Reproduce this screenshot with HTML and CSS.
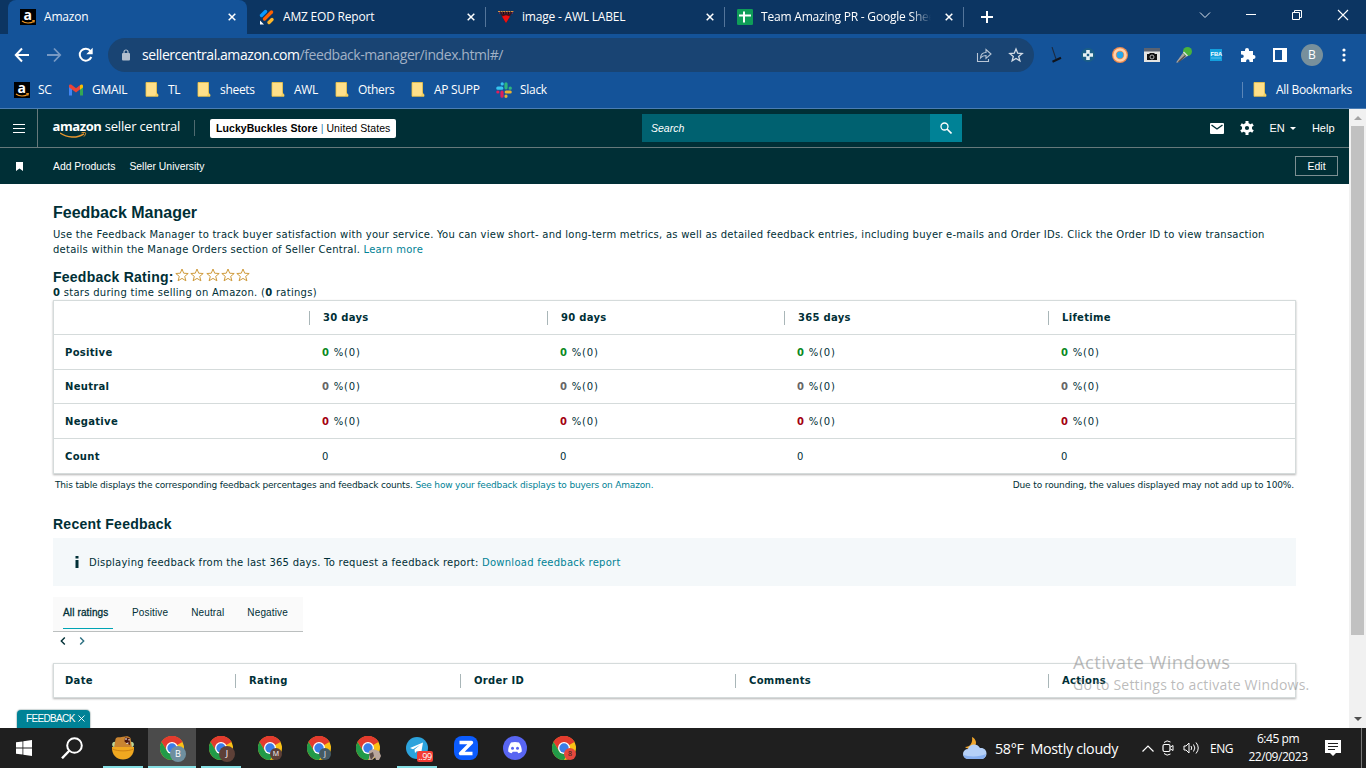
FILE: index.html
```html
<!DOCTYPE html>
<html lang="en">
<head>
    <meta charset="UTF-8">
    <meta name="viewport" content="width=device-width, initial-scale=1.0">
    <title>Amazon</title>
    <link rel="stylesheet" href="styles.css">
</head>
<body>
    <!-- Shared icons -->
    <svg class="sprite" width="0" height="0">
        <symbol id="amazon" viewBox="0 0 16 16">
            <rect width="16" height="16" fill="#000"/>
            <text x="3.4" y="10.6" font-family="Open Sans" font-weight="700" font-size="14" fill="#fff">a</text>
            <path d="M2 12c3.5 2.6 8.500 2.600 12 .2M12.300 11.500l2 .2-.6 1.800" fill="none" stroke="#f59a22" stroke-width="1.200"/>
        </symbol>
        <symbol id="close" viewBox="0 0 8 8">
            <path d="M.7.7l6.600 6.600M7.300.7L.7 7.300" stroke="#fff" stroke-width="1.500"/>
        </symbol>
        <symbol id="folder" viewBox="0 0 14 15">
            <path d="M1 .5h10.500v11l1.500 1v1.800H1z" fill="#ffe08a" stroke="#f2c744" stroke-width=".8"/>
            <path d="M10 14l1.500-4 1 2.500V14z" fill="#f5d060"/>
        </symbol>
        <symbol id="chrome" viewBox="0 0 24 24">
            <circle cx="12" cy="12" r="12" fill="#fbc116"/>
            <path d="M12 12L1.600 6A12 12 0 0 1 22.400 6z" fill="#e33b2e"/>
            <path d="M12 6h10.400A12 12 0 0 0 1.600 6L7 15z" fill="#e33b2e"/>
            <path d="M1.600 6a12 12 0 0 0 10.400 18l5.200-9L12 17.500 7 15z" fill="#229a48"/>
            <circle cx="12" cy="12" r="6" fill="#fff"/>
            <circle cx="12" cy="12" r="4.700" fill="#3b7de8"/>
        </symbol>
        <symbol id="star" viewBox="0 0 14 14">
            <path d="M7 1l1.700 4.200 4.500.3-3.500 2.900 1.200 4.400L7 10.400l-3.900 2.400 1.200-4.400L.8 5.500l4.500-.3z" fill="none" stroke="#cf9b3c" stroke-width="1"/>
        </symbol>
    </svg>

    <div class="browser">
        <div class="tab-strip">
            <div class="tab active">
                <svg class="favicon"><use href="#amazon"/></svg>
                <span class="tab-title">Amazon</span>
                <svg class="tab-close"><use href="#close"/></svg>
            </div>
            <div class="tab">
                <svg class="favicon" viewBox="0 0 16 16">
                    <g stroke-width="3.400" stroke-linecap="round">
                        <path d="M2.500 6.500l4-4" stroke="#0a99ff"/>
                        <path d="M5.500 10l7-7" stroke="#ff6100"/>
                        <path d="M10 13.500l3-3" stroke="#ffb629"/>
                    </g>
                    <path d="M1 11.500l4 4H1z" fill="#fff"/>
                </svg>
                <span class="tab-title">AMZ EOD Report</span>
                <svg class="tab-close"><use href="#close"/></svg>
            </div>
            <div class="tab">
                <svg class="favicon" viewBox="0 0 16 16">
                    <path d="M1 2.500h14l-2 3H3z" fill="#101010"/>
                    <path d="M0 2.500h16" stroke="#d9913e" stroke-dasharray="2 .6"/>
                    <path d="M1 4h14" stroke="#b03060" stroke-dasharray="1.500 1"/>
                    <path d="M3 5.500h10l-5 8.500z" fill="#5c0c10"/>
                    <path d="M4 7.500L8 6.300l4 1.200L8 14z" fill="#f01010"/>
                </svg>
                <span class="tab-title">image - AWL LABEL</span>
                <svg class="tab-close"><use href="#close"/></svg>
            </div>
            <div class="tab">
                <svg class="favicon" viewBox="0 0 16 16">
                    <rect width="16" height="16" rx="1.200" fill="#0f9d58"/>
                    <path d="M7 2.500v11M2 6.500h12" stroke="#fff" stroke-width="2"/>
                </svg>
                <span class="tab-title faded">Team Amazing PR - Google Sheets</span>
                <svg class="tab-close"><use href="#close"/></svg>
            </div>
            <svg class="new-tab" viewBox="0 0 12 12"><path d="M6 0v12M0 6h12" stroke="#fff" stroke-width="2"/></svg>
            <div class="window-controls">
                <svg width="12" height="12" viewBox="0 0 12 12"><path d="M1 3.500l5 5 5-5" fill="none" stroke="#dde5ee"/></svg>
                <svg width="12" height="12" viewBox="0 0 12 12"><path d="M1 5.500h10" stroke="#fff"/></svg>
                <svg width="12" height="12" viewBox="0 0 12 12"><path d="M1.500 3.500h7v7h-7zM3.500 3.500v-2h7v7h-2" fill="none" stroke="#fff"/></svg>
                <svg width="12" height="12" viewBox="0 0 12 12"><path d="M1 1l10 10M11 1L1 11" stroke="#fff" stroke-width="1.100"/></svg>
            </div>
        </div>

        <div class="toolbar">
            <div class="nav-buttons">
                <svg width="16" height="16" viewBox="0 0 16 16"><path d="M15 8H2M8 1.500L1.800 8 8 14.500" fill="none" stroke="#fff" stroke-width="2"/></svg>
                <svg width="16" height="16" viewBox="0 0 16 16"><path d="M1 8h13M8 1.500L14.200 8 8 14.500" fill="none" stroke="#7799c4" stroke-width="1.800"/></svg>
                <svg width="16" height="16" viewBox="0 0 16 16"><path d="M13.300 10A6 6 0 1 1 12.500 4" fill="none" stroke="#fff" stroke-width="2"/><path d="M14.700.8v6.400H8.300z" fill="#fff"/></svg>
            </div>
            <div class="address-bar">
                <svg class="lock" width="10" height="12" viewBox="0 0 10 12"><rect x="1" y="4" width="8" height="7.500" rx="1" fill="#b3bfce"/><path d="M3 4.500V3a2 2 0 0 1 4 0v1.500" fill="none" stroke="#b3bfce" stroke-width="1.200"/></svg>
                <span class="url"><b>sellercentral.amazon.com</b>/feedback-manager/index.html#/</span>
                <svg width="16" height="16" viewBox="0 0 16 16"><path d="M1.500 6v8.500h11V12M4.500 11c.3-4 2.500-5.500 5.500-5.500V2.500L15 7l-5 4.300V8.500C7.500 8.500 6 9 4.500 11z" fill="none" stroke="#b9c6d6" stroke-width="1.100"/></svg>
                <svg width="16" height="16" viewBox="0 0 16 16"><path d="M8 2l1.700 4.200 4.500.3-3.500 2.900 1.200 4.400L8 11.400l-3.900 2.400 1.200-4.400-3.500-2.900 4.500-.3z" fill="none" stroke="#d3dce6" stroke-width="1.300"/></svg>
            </div>
            <div class="extensions">
                <svg viewBox="0 0 16 16"><path d="M4 0l4 12" stroke="#1d2c42" stroke-width="1.100"/><path d="M4.500 14.700l8.500-4" stroke="#10141c" stroke-width="2.200"/></svg>
                <svg viewBox="0 0 16 16"><circle cx="8" cy="8" r="7" fill="#1b5e86"/><path d="M8 3v10M3 8h10" stroke="#e8f2f4" stroke-width="3.600"/><rect x="6.800" y="6.800" width="2.400" height="2.400" fill="#1b5e86"/></svg>
                <svg viewBox="0 0 16 16"><circle cx="8" cy="8" r="8" fill="#f08a4b"/><circle cx="8" cy="8" r="5.500" fill="none" stroke="#ffd2ac" stroke-width="2.600"/><circle cx="8" cy="8" r="3.400" fill="#22a7ee"/></svg>
                <svg viewBox="0 0 16 16"><rect y="1" width="16" height="14" fill="#e4e4e2"/><path d="M0 1h16v3.500H0z" fill="#5a6270"/><path d="M3 7h2l1-1h4l1 1h2v6H3z" fill="#111"/><circle cx="8" cy="10" r="2" fill="none" stroke="#ddd" stroke-width=".8"/></svg>
                <svg viewBox="0 0 16 16"><path d="M0 15.500L8 4.500l4 4-10 7z" fill="#a9a39e"/><path d="M2.500 15L10 8" stroke="#4f4b4a" stroke-width="1.200"/><circle cx="11.500" cy="4.500" r="4.500" fill="#48b23c"/><path d="M7.500 5l4 4" stroke="#ddd" stroke-width="1.500"/></svg>
                <svg viewBox="0 0 16 16"><rect x="2" y="2" width="12" height="12" fill="#13a0de"/><text x="2.400" y="8.700" font-family="Liberation Sans" font-weight="700" font-size="5.800" fill="#fff">FBA</text><path d="M3 11h10" stroke="#70c8ef" stroke-width=".8"/></svg>
                <svg viewBox="0 0 16 16"><path d="M1 4h4V3a2 2 0 0 1 4 0v1h4v4h.500a2 2 0 0 1 0 4H13v3H9.500v-1a1.700 1.700 0 0 0-3.400 0v1H1v-4h1a1.700 1.700 0 0 0 0-3.500H1z" fill="#fff"/></svg>
                <svg viewBox="0 0 16 16"><path d="M2 2h12v12H2z" fill="none" stroke="#fff" stroke-width="2"/><path d="M10 1h5v14h-5z" fill="#fff"/></svg>
            </div>
            <div class="profile">B</div>
            <svg class="kebab" viewBox="0 0 4 14"><circle cx="2" cy="2" r="1.600" fill="#fff"/><circle cx="2" cy="7" r="1.600" fill="#fff"/><circle cx="2" cy="12" r="1.600" fill="#fff"/></svg>
        </div>

        <div class="bookmarks">
            <a class="bookmark sc"><svg class="favicon"><use href="#amazon"/></svg>SC</a>
            <a class="bookmark gmail"><svg width="14" height="12" viewBox="0 0 14 12"><path d="M0 2v9.500h3V4z" fill="#4285f4"/><path d="M14 2v9.500h-3V4z" fill="#34a853"/><path d="M0 1.800C0 .5 1.500 0 2.500.8L7 4.300 11.500.8l-.3 4.400L7 8.400 0 3.200z" fill="#ea4335"/><path d="M11 1.200C12.500 0 14 .5 14 2v1.500l-3 2.200z" fill="#fbbc04"/></svg>GMAIL</a>
            <a class="bookmark tl"><svg class="folder"><use href="#folder"/></svg>TL</a>
            <a class="bookmark sheets"><svg class="folder"><use href="#folder"/></svg>sheets</a>
            <a class="bookmark awl"><svg class="folder"><use href="#folder"/></svg>AWL</a>
            <a class="bookmark others"><svg class="folder"><use href="#folder"/></svg>Others</a>
            <a class="bookmark supp"><svg class="folder"><use href="#folder"/></svg>AP SUPP</a>
            <a class="bookmark slack">
                <svg width="16" height="16" viewBox="0 0 16 16"><g stroke-width="3.200" stroke-linecap="round"><path d="M1.800 6.200h4M6.200 1.800v.1" stroke="#36c5f0"/><path d="M10 1.800v4M14.200 6.200h.1" stroke="#2eb67d"/><path d="M10.200 10h4M10 14.200v.1" stroke="#ecb22e"/><path d="M6 10.200v4M1.800 10h.1" stroke="#e01e5a"/></g></svg>
                Slack
            </a>
            <a class="bookmark all"><svg class="folder"><use href="#folder"/></svg>All Bookmarks</a>
        </div>
    </div>

    <div class="viewport">
        <div class="page">
            <header class="top-nav">
                <div class="menu-button">
                    <svg width="12" height="9" viewBox="0 0 12 9"><path d="M0 .5h12M0 4.500h12M0 8.500h12" stroke="#fff" stroke-width="1.200"/></svg>
                </div>
                <div class="brand">
                    <span class="brand-name"><b>amazon</b> seller central</span>
                    <svg class="smile" width="27" height="7" viewBox="0 0 27 7"><path d="M0 1c7 5 17 5.500 24 .8" fill="none" stroke="#e8962e" stroke-width="1.400"/><path d="M21.500.8c2-.6 3.500-.5 4 0s-.3 2.500-1.500 3.700" fill="none" stroke="#e8962e"/></svg>
                </div>
                <div class="store-picker"><b>LuckyBuckles Store</b> <i>|</i> United States</div>
                <div class="search">
                    <span class="search-input">Search</span>
                    <span class="search-button">
                        <svg width="12" height="12" viewBox="0 0 12 12"><circle cx="4.500" cy="4.500" r="3.500" fill="none" stroke="#fff" stroke-width="1.300"/><path d="M7 7l4.500 4.500" stroke="#fff" stroke-width="1.600"/></svg>
                    </span>
                </div>
                <div class="top-links">
                    <svg width="14" height="11" viewBox="0 0 14 11"><rect width="14" height="11" rx="1" fill="#fff"/><path d="M1.500 2L7 6l5.500-4" fill="none" stroke="#002f36" stroke-width="1.400"/></svg>
                    <svg width="14" height="14" viewBox="0 0 14 14"><circle cx="7" cy="7" r="3.600" fill="none" stroke="#fff" stroke-width="3"/><path d="M7 0v3M7 11v3M1 3.500l2.500 1.500M10.500 9L13 10.500M1 10.500L3.500 9M10.500 5L13 3.500" stroke="#fff" stroke-width="3"/></svg>
                    <span class="lang">EN <i class="caret"></i></span>
                    <span>Help</span>
                </div>
            </header>
            <nav class="sub-nav">
                <svg width="7" height="9" viewBox="0 0 7 9"><path d="M0 0h7v9L3.500 6.500 0 9z" fill="#fff"/></svg>
                <a>Add Products</a>
                <a>Seller University</a>
                <button class="edit-button">Edit</button>
            </nav>

            <main class="content">
                <h1>Feedback Manager</h1>
                <p class="intro">Use the Feedback Manager to track buyer satisfaction with your service. You can view short- and long-term metrics, as well as detailed feedback entries, including buyer e-mails and Order IDs. Click the Order ID to view transaction<br>details within the Manage Orders section of Seller Central. <a>Learn more</a></p>

                <div class="rating">
                    <h2>Feedback Rating:</h2>
                    <div class="stars">
                        <svg><use href="#star"/></svg>
                        <svg><use href="#star"/></svg>
                        <svg><use href="#star"/></svg>
                        <svg><use href="#star"/></svg>
                        <svg><use href="#star"/></svg>
                    </div>
                </div>
                <p class="rating-note"><b>0</b> stars during time selling on Amazon. (<b>0</b> ratings)</p>

                <table class="summary">
                    <colgroup><col class="c1"><col class="c2"><col class="c3"><col class="c4"><col></colgroup>
                    <tr><th></th><th><span>30 days</span></th><th><span>90 days</span></th><th><span>365 days</span></th><th><span>Lifetime</span></th></tr>
                    <tr class="positive"><th>Positive</th><td><b>0</b> %(0)</td><td><b>0</b> %(0)</td><td><b>0</b> %(0)</td><td><b>0</b> %(0)</td></tr>
                    <tr class="neutral short"><th>Neutral</th><td><b>0</b> %(0)</td><td><b>0</b> %(0)</td><td><b>0</b> %(0)</td><td><b>0</b> %(0)</td></tr>
                    <tr class="negative"><th>Negative</th><td><b>0</b> %(0)</td><td><b>0</b> %(0)</td><td><b>0</b> %(0)</td><td><b>0</b> %(0)</td></tr>
                    <tr><th>Count</th><td>0</td><td>0</td><td>0</td><td>0</td></tr>
                </table>
                <div class="table-notes">
                    <span>This table displays the corresponding feedback percentages and feedback counts. <a>See how your feedback displays to buyers on Amazon.</a></span>
                    <span>Due to rounding, the values displayed may not add up to 100%.</span>
                </div>

                <h2 class="recent-title">Recent Feedback</h2>
                <div class="info-box">
                    <svg width="4" height="12" viewBox="0 0 4 12"><path d="M.5 0h3v2.500h-3zM.5 4h3v8h-3z" fill="#002f36"/></svg>
                    <span>Displaying feedback from the last 365 days. To request a feedback report: <a>Download feedback report</a></span>
                </div>

                <div class="filter-tabs">
                    <a class="selected">All ratings</a>
                    <a>Positive</a>
                    <a>Neutral</a>
                    <a>Negative</a>
                </div>
                <div class="pager">
                    <svg width="6" height="8" viewBox="0 0 6 8"><path d="M4.800.5L1.300 4l3.500 3.500" fill="none" stroke="#002f36" stroke-width="1.400"/></svg>
                    <svg width="6" height="8" viewBox="0 0 6 8"><path d="M1.200.5L4.700 4 1.200 7.500" fill="none" stroke="#2b6f80" stroke-width="1.400"/></svg>
                </div>

                <table class="recent">
                    <colgroup><col class="c1"><col class="c2"><col class="c3"><col class="c4"><col></colgroup>
                    <tr><th>Date</th><th><span>Rating</span></th><th><span>Order ID</span></th><th><span>Comments</span></th><th><span>Actions</span></th></tr>
                </table>
            </main>
        </div>

        <div class="scrollbar">
            <i class="arrow up"></i>
            <div class="thumb"></div>
            <i class="arrow down"></i>
        </div>

        <div class="feedback-tab">FEEDBACK <svg width="7" height="7" viewBox="0 0 7 7"><path d="M.5.5l6 6M6.500.5l-6 6" stroke="#fff" stroke-width=".9"/></svg></div>
    </div>

    <div class="watermark">
        <div class="watermark-title">Activate Windows</div>
        <div class="watermark-text">Go to Settings to activate Windows.</div>
    </div>

    <div class="taskbar">
        <div class="slot start"><svg width="16" height="16" viewBox="0 0 16 16"><path d="M0 2.300l6.500-.9v6.200H0zM7.300 1.300L16 0v7.600H7.300zM0 8.400h6.500v6.200L0 13.700zM7.300 8.400H16V16l-8.700-1.200z" fill="#fff"/></svg></div>
        <div class="slot find"><svg width="22" height="22" viewBox="0 0 22 22"><circle cx="13.500" cy="8.500" r="7.300" fill="none" stroke="#fff" stroke-width="2"/><path d="M8.500 13.500L1 21.300" stroke="#fff" stroke-width="2.400"/></svg></div>
        <div class="slot running">
            <svg width="24" height="24" viewBox="0 0 24 24"><circle cx="4" cy="8.500" r="2.800" fill="#bcd79a"/><circle cx="20" cy="8.500" r="2.800" fill="#bcd79a"/><path d="M3 12L4.500 3C6 0 9 2 12 .8c3-.8 6-.8 7.500 1.200L21 12z" fill="#c98431"/><path d="M14 1.500l4.500.5.5 7-3-1.500-2.500-2z" fill="#4a1712"/><path d="M15 2v2M18 3v1.500M15.500 7.500l2-.5" stroke="#fff"/><path d="M1 11h22c.6 8-5 12.500-11 12.500S.4 19 1 11z" fill="#f0a820"/><path d="M1.500 13c5 2.500 16 2.500 21 0" fill="none" stroke="#cf8212"/></svg>
        </div>
        <div class="slot running current"><svg width="24" height="24"><use href="#chrome"/></svg><span class="badge blue">B</span></div>
        <div class="slot running"><svg width="24" height="24"><use href="#chrome"/></svg><span class="badge brown">J</span></div>
        <div class="slot"><svg width="24" height="24"><use href="#chrome"/></svg><span class="badge small brown">M</span></div>
        <div class="slot"><svg width="24" height="24"><use href="#chrome"/></svg><span class="badge small slate">J</span></div>
        <div class="slot"><svg width="24" height="24"><use href="#chrome"/></svg>
            <svg class="badge-art" width="13" height="13" viewBox="0 0 13 13"><path d="M1 3l4-2 6 2 2 5-2 4H8L7 9l-3 3H1z" fill="#b9a79d"/><path d="M1 6l4-2 1 4-3 4" fill="#5d4c47"/></svg>
        </div>
        <div class="slot running">
            <svg width="22" height="22" viewBox="0 0 22 22"><circle cx="11" cy="11" r="11" fill="#2ca3dc"/><path d="M4 11l13-5.500-2 11.500-4-3-2 2-.5-3.500L14 8l-7 4.200z" fill="#fff"/></svg>
            <span class="count">..99</span>
        </div>
        <div class="slot"><svg width="24" height="24" viewBox="0 0 24 24"><rect width="24" height="24" rx="8" fill="#0b5cff"/><path d="M5.500 6.500h12L6.500 17.500h12" fill="none" stroke="#fff" stroke-width="3.400" stroke-linejoin="round"/></svg></div>
        <div class="slot"><svg width="24" height="24" viewBox="0 0 24 24"><circle cx="12" cy="12" r="12" fill="#5865f2"/><path d="M8 6.500c2.500-.8 5.500-.8 8 0 1.800 2.500 3 6 2.800 9-1.200 1-2.300 1.500-3.500 1.800l-1-1.500h-4.600l-1 1.500c-1.200-.3-2.300-.8-3.500-1.800C5 12.500 6.200 9 8 6.500z" fill="#fff"/><circle cx="9.500" cy="12.300" r="1.500" fill="#5865f2"/><circle cx="14.500" cy="12.300" r="1.500" fill="#5865f2"/></svg></div>
        <div class="slot"><svg width="24" height="24"><use href="#chrome"/></svg><span class="badge small red">8</span></div>

        <div class="tray">
            <svg class="weather" width="26" height="24" viewBox="0 0 26 24"><path d="M10 1c4 2 5 6 3 9s-7 4-10 1c5 0 8-4 7-10z" fill="#f0a62c"/><path d="M6 23a5 5 0 0 1 0-10c1-5 9-6.500 12-1 4-.5 6.500 2 6.500 5.500S22 23 19 23z" fill="#b5d0f7"/><path d="M1.500 19c5 2 17 2 22.500-1-.5 3-2 5-5 5H6c-2.500 0-4-1.500-4.500-4z" fill="#88b0f0"/></svg>
            <span class="weather-text">58°F&nbsp; Mostly cloudy</span>
            <svg class="chevron" width="12" height="7" viewBox="0 0 12 7"><path d="M.5 6.500L6 1l5.500 5.500" fill="none" stroke="#fff" stroke-width="1.200"/></svg>
            <svg class="meet" width="12" height="16" viewBox="0 0 12 16"><rect x="1" y="4.500" width="7" height="7" rx="1.500" fill="none" stroke="#fff" stroke-width="1.200"/><path d="M8.500 7L11 5.500v5L8.500 9M2 2.500Q5-.5 8.500 2M2 13.500q3 3 6.500.5" fill="none" stroke="#fff"/></svg>
            <svg class="volume" width="17" height="14" viewBox="0 0 17 14"><path d="M1 5h2l3-3v10L3 9H1zM8 5q1.500 2 0 4M10.500 3.500q2.700 3.500 0 7M13 1.500q4.500 5.500 0 11" fill="none" stroke="#fff"/></svg>
            <span class="input-lang">ENG</span>
            <div class="clock"><div>6:45 pm</div><div>22/09/2023</div></div>
            <svg class="notify" width="16" height="16" viewBox="0 0 16 16"><path d="M0 0h16v13h-5l-3 3-3-3H0z" fill="#fff"/><path d="M3 3.500h10M3 6.500h10M3 9.500h7" stroke="#1f1f1f"/></svg>
            <i class="show-desktop"></i>
        </div>
    </div>
</body>
</html>
```
FILE: styles.css
```css
* {
    margin: 0;
    padding: 0;
    box-sizing: border-box;
}

body {
    width: 1366px;
    height: 768px;
    overflow: hidden;
    position: relative;
    display: flex;
    flex-direction: column;
    background: #fff;
    font-family: "DejaVu Sans", sans-serif;
}

svg {
    display: block;
    flex-shrink: 0;
}

.sprite {
    position: absolute;
}

/* Browser chrome */
.browser {
    height: 109px;
    background: #145399;
    border-bottom: 1px solid #4b7db3;
    font-family: "Open Sans", sans-serif;
    font-size: 12px;
    color: #fff;
}

.tab-strip {
    display: flex;
    align-items: center;
    height: 34px;
    padding-left: 8px;
    background: #0c3562;
}

.tab {
    display: flex;
    align-items: center;
    width: 239px;
    height: 34px;
    padding: 0 11px 0 12px;
    background: linear-gradient(#54759a, #54759a) right center / 1px 20px no-repeat;
}

.tab.active {
    background: #145399;
    border-radius: 8px 8px 0 0;
}

.favicon {
    width: 16px;
    height: 16px;
}

.tab-title {
    flex: 1;
    margin: 0 14px 0 8px;
    padding-bottom: 1px;
    overflow: hidden;
    white-space: nowrap;
    letter-spacing: -0.2px;
}

.tab-title.faded {
    -webkit-mask-image: linear-gradient(to right, #000 88%, transparent);
    mask-image: linear-gradient(to right, #000 88%, transparent);
}

.tab-close {
    width: 8px;
    height: 8px;
}

.new-tab {
    width: 12px;
    height: 12px;
    margin-left: 17px;
}

.window-controls {
    display: flex;
    gap: 34px;
    margin: -5px 17px 0 auto;
}

.toolbar {
    display: flex;
    align-items: center;
    height: 42px;
    padding: 0 20px 0 14px;
}

.nav-buttons {
    display: flex;
    gap: 16px;
    width: 94px;
}

.address-bar {
    display: flex;
    align-items: center;
    width: 926px;
    height: 34px;
    padding: 0 10px 0 13px;
    border-radius: 17px;
    background: #194473;
}

.url {
    flex: 1;
    margin-left: 11px;
    padding-bottom: 1px;
    font-size: 14px;
    letter-spacing: -0.43px;
    color: #a1b1c6;
}

.url b {
    font-weight: 400;
    color: #fff;
}

.address-bar svg + svg {
    margin-left: 16px;
}

.extensions {
    display: flex;
    gap: 16px;
    margin-left: 14px;
}

.extensions svg {
    width: 16px;
    height: 16px;
}

.profile {
    width: 22px;
    height: 22px;
    margin-left: 13px;
    border-radius: 50%;
    background: #78909c;
    line-height: 22px;
    text-align: center;
}

.kebab {
    width: 4px;
    height: 14px;
    margin-left: auto;
}

.bookmarks {
    display: flex;
    align-items: center;
    height: 28px;
    padding: 0 14px 1px;
    letter-spacing: -0.3px;
}

.bookmark {
    display: flex;
    align-items: center;
    gap: 8px;
}

.bookmark .folder {
    width: 14px;
    height: 15px;
    margin-right: 1px;
}

.sc { width: 55px; }
.gmail { width: 76px; gap: 9px; }
.tl { width: 52px; }
.sheets { width: 74px; }
.awl { width: 64px; }
.others { width: 76px; }
.supp { width: 85px; }

.bookmark.all {
    height: 16px;
    margin-left: auto;
    padding-left: 10px;
    border-left: 1px solid #5b86b8;
}

/* Seller Central header */
.viewport {
    position: relative;
    display: flex;
    height: 619px;
    overflow: hidden;
}

.page {
    width: 1349px;
}

.top-nav {
    display: flex;
    align-items: center;
    height: 39px;
    background: #002f36;
    border-bottom: 1px solid #66797b;
    font-family: "Liberation Sans", sans-serif;
    font-size: 10.5px;
    color: #fff;
}

.menu-button {
    display: flex;
    align-items: center;
    width: 38px;
    height: 38px;
    padding-left: 13px;
    border-right: 1px solid #66797b;
}

.brand {
    width: 157px;
    height: 16px;
    margin-right: 15px;
    padding-left: 14.5px;
    border-right: 1px solid #4f6b70;
}

.brand-name {
    display: block;
    height: 12px;
    line-height: 12px;
    font-family: "Open Sans", sans-serif;
    font-size: 13px;
    letter-spacing: -0.18px;
    white-space: nowrap;
}

.brand-name b {
    letter-spacing: -0.4px;
}

.smile {
    margin: 0 0 0 7px;
}

.store-picker {
    width: 186px;
    height: 19px;
    padding-left: 6px;
    border-radius: 2px;
    background: #fff;
    line-height: 19px;
    letter-spacing: 0.07px;
    color: #000;
    white-space: nowrap;
}

.store-picker i {
    font-style: normal;
    color: #3c87b0;
}

.search {
    display: flex;
    width: 320px;
    height: 28px;
    margin-left: 246px;
    line-height: 28px;
}

.search-input {
    width: 288px;
    padding-left: 9px;
    background: #006170;
    font-style: italic;
}

.search-button {
    display: flex;
    align-items: center;
    justify-content: center;
    width: 32px;
    background: #008296;
}

.top-links {
    display: flex;
    align-items: center;
    gap: 16px;
    margin-left: auto;
    margin-right: 14.5px;
    font-size: 11px;
}

.caret {
    display: inline-block;
    margin: 0 0 2px 2px;
    border: 3px solid transparent;
    border-top-color: #fff;
    border-bottom: 0;
}

.sub-nav {
    display: flex;
    align-items: center;
    height: 36px;
    padding: 0 11px 0 16px;
    background: #002f36;
    font-family: "Liberation Sans", sans-serif;
    font-size: 10.4px;
    color: #fff;
}

.sub-nav a {
    margin-right: 14px;
    padding-top: 1px;
}

.sub-nav svg {
    margin-right: 30px;
}

.edit-button {
    width: 43px;
    height: 20px;
    margin-left: auto;
    border: 1px solid #7c8f92;
    background: none;
    font-family: inherit;
    font-size: 10.5px;
    color: #fff;
}

/* Feedback manager */
.content {
    padding: 20px 53px 0;
    color: #002f36;
    font-size: 10px;
}

.content a {
    color: #008296;
}

h1,
h2 {
    font-family: "Liberation Sans", sans-serif;
    font-size: 16px;
    line-height: 18px;
}

h2 {
    font-size: 14px;
    letter-spacing: 0.25px;
}

.intro {
    margin-top: 5px;
    line-height: 15px;
    letter-spacing: 0.249px;
    white-space: nowrap;
}

.rating {
    display: flex;
    height: 18px;
    margin-top: 11px;
}

.stars {
    display: flex;
    gap: 1.2px;
    margin-left: 1.5px;
}

.stars svg {
    width: 14px;
    height: 14px;
}

.rating-note {
    height: 14px;
    line-height: 14px;
    letter-spacing: 0.28px;
}

table {
    width: 1243px;
    table-layout: fixed;
    border-collapse: separate;
    border-spacing: 0;
    border: 1px solid #d5dbdb;
    box-shadow: 0 1px 2px rgba(0, 0, 0, 0.3);
    letter-spacing: 0.3px;
    text-align: left;
}

th {
    padding-left: 11px;
}

th span {
    display: block;
    margin-left: -11px;
    padding-left: 13px;
    border-left: 1px solid #a9b6b8;
    line-height: 14px;
}

td {
    padding-left: 13px;
    letter-spacing: 0.8px;
}

.summary th,
.summary td {
    height: 35px;
    border-bottom: 1px solid #d5dbdb;
}

.summary tr:first-child th,
.summary .short th,
.summary .short td {
    height: 34px;
}

.summary tr:last-child th,
.summary tr:last-child td {
    height: 34px;
    border-bottom: 0;
}

.summary .c1 { width: 255px; }
.summary .c2 { width: 238px; }
.summary .c3 { width: 237px; }
.summary .c4 { width: 264px; }

.positive td b { color: #0a8a1e; }
.neutral td b { color: #666; }
.negative td b { color: #a3000e; }

.table-notes {
    display: flex;
    justify-content: space-between;
    margin-top: 5px;
    padding: 0 2px;
    font-size: 9px;
    line-height: 12px;
    letter-spacing: -0.17px;
}

.table-notes span + span {
    letter-spacing: -0.13px;
}

.recent-title {
    margin-top: 24px;
}

.info-box {
    display: flex;
    align-items: center;
    gap: 10px;
    width: 1243px;
    height: 48px;
    margin-top: 5px;
    padding-left: 22px;
    background: #f4f8fa;
    letter-spacing: 0.25px;
}

.filter-tabs {
    display: flex;
    gap: 23px;
    width: 250px;
    height: 35px;
    margin-top: 11px;
    padding-left: 10px;
    background: #fafafa;
    border-bottom: 1px solid #bbbfbf;
    font-family: "Liberation Sans", sans-serif;
    letter-spacing: 0.14px;
    line-height: 31px;
}

.filter-tabs a {
    height: 32px;
    color: #002f36;
}

.filter-tabs .selected {
    width: 50px;
    margin-right: -4px;
    border-bottom: 1px solid #00a4b4;
    -webkit-text-stroke: 0.3px #002f36;
}

.pager {
    display: flex;
    gap: 13px;
    margin: 5px 0 18px 7px;
}

.recent th {
    height: 33px;
}

.recent .c1 { width: 181px; }
.recent .c2 { width: 225px; }
.recent .c3 { width: 275px; }
.recent .c4 { width: 313px; }

.scrollbar {
    display: flex;
    flex-direction: column;
    align-items: center;
    width: 17px;
    background: #f1f1f1;
}

.thumb {
    width: 13px;
    height: 509px;
    background: #c1c1c1;
}

.arrow {
    margin: 7px 0 6px;
    border: 4px solid transparent;
}

.arrow.up {
    border-top: 0;
    border-bottom-color: #a3a3a3;
}

.arrow.down {
    margin: auto 0 7px;
    border-bottom: 0;
    border-top-color: #505050;
}

.feedback-tab {
    position: absolute;
    left: 17px;
    bottom: 0;
    display: flex;
    align-items: center;
    gap: 3px;
    width: 73px;
    height: 18px;
    padding: 0 0 1px 9px;
    border-radius: 4px 4px 0 0;
    background: #008296;
    box-shadow: 0 0 1px 1px #ccd5d5;
    font-family: "Liberation Sans", sans-serif;
    font-size: 10px;
    letter-spacing: -0.65px;
    color: #fff;
}

.watermark {
    position: absolute;
    left: 1073px;
    top: 650px;
    font-family: "Open Sans", sans-serif;
    color: rgba(120, 120, 120, 0.5);
    white-space: nowrap;
}

.watermark-title {
    font-size: 18.5px;
    line-height: 24px;
    letter-spacing: 0.35px;
}

.watermark-text {
    font-size: 14px;
    line-height: 22px;
    letter-spacing: 0.2px;
}

/* Taskbar */
.taskbar {
    display: flex;
    gap: 1px;
    height: 40px;
    background: #1f1f1f;
    font-family: "Open Sans", sans-serif;
    color: #fff;
}

.slot {
    position: relative;
    display: flex;
    align-items: center;
    justify-content: center;
    width: 48px;
    height: 40px;
}

.start {
    width: 47px;
    padding-left: 1px;
}

.find {
    margin-right: 2px;
}

.running {
    background: linear-gradient(#86dfe4, #86dfe4) center bottom / 40px 2px no-repeat;
}

.running.current {
    background: linear-gradient(#86dfe4, #86dfe4) center bottom / 48px 2px no-repeat #4b4b4b;
}

.badge {
    position: absolute;
    left: 22px;
    top: 18px;
    width: 16px;
    height: 16px;
    border-radius: 50%;
    font-size: 9px;
    line-height: 16px;
    text-align: center;
}

.badge.small {
    left: 24px;
    top: 20px;
    width: 12px;
    height: 12px;
    font-size: 7px;
    line-height: 12px;
}

.badge.blue { background: #6f8f9f; }
.badge.brown { background: #5d4037; }
.badge.slate { background: #455a64; }
.badge.red { background: #e5483d; color: #222; }

.badge-art {
    position: absolute;
    left: 24px;
    top: 20px;
}

.count {
    position: absolute;
    left: 24px;
    top: 23px;
    width: 16px;
    height: 11px;
    border-radius: 2px;
    background: #f23c34;
    font-size: 9px;
    line-height: 11px;
    letter-spacing: -0.4px;
    text-align: center;
}

.tray {
    display: flex;
    align-items: center;
    margin-left: auto;
    white-space: nowrap;
}

.weather-text {
    width: 152px;
    margin-left: 7px;
    font-size: 14.3px;
    letter-spacing: -0.3px;
}

.meet {
    margin-left: 8px;
}

.chevron {
    margin-left: -5px;
}

.volume {
    margin-left: 9px;
}

.input-lang {
    width: 34px;
    margin-left: 10px;
    font-size: 12px;
    letter-spacing: -0.5px;
}

.clock {
    width: 68px;
    font-size: 12px;
    line-height: 18px;
    letter-spacing: -0.45px;
    text-align: center;
}

.notify {
    margin-left: 13px;
}

.show-desktop {
    width: 5px;
    height: 40px;
    margin-left: 20px;
    border-left: 1px solid #777;
}
```
